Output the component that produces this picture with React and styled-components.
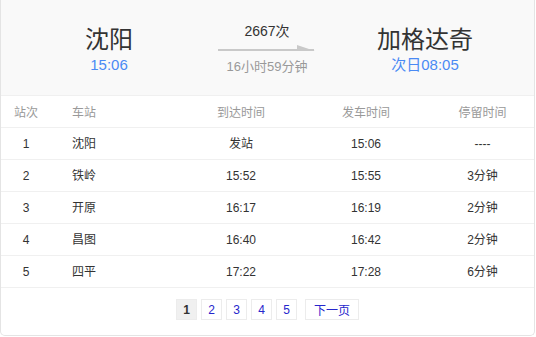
import React from 'react';
import styled, { createGlobalStyle } from 'styled-components';

const stops = [
  { no: 1, name: '沈阳', arrive: '发站', depart: '15:06', stay: '----' },
  { no: 2, name: '铁岭', arrive: '15:52', depart: '15:55', stay: '3分钟' },
  { no: 3, name: '开原', arrive: '16:17', depart: '16:19', stay: '2分钟' },
  { no: 4, name: '昌图', arrive: '16:40', depart: '16:42', stay: '2分钟' },
  { no: 5, name: '四平', arrive: '17:22', depart: '17:28', stay: '6分钟' },
];

const GlobalStyle = createGlobalStyle`
  body {
    margin: 0;
    background: #fff;
    font-family: "Liberation Sans", Arial, "Noto Sans CJK SC", sans-serif;
  }
`;

const Card = styled.div`
  width: 535px;
  height: 336px;
  box-sizing: border-box;
  border: 1px solid #e4e4e4;
  border-top: none;
  border-radius: 0 0 5px 5px;
  overflow: hidden;
  background: #fff;
`;

const Summary = styled.div`
  height: 96px;
  box-sizing: border-box;
  background: #f9f9f9;
  border-bottom: 1px solid #f0f0f0;
  display: grid;
  grid-template-columns: 216px 100px 216px;
  align-items: center;
`;

const Station = styled.div`
  display: flex;
  flex-direction: column;
  align-items: center;
  padding-top: 4px;
`;

const City = styled.div`
  font-size: 24px;
  color: #333;
  line-height: 30px;
`;

const Time = styled.div`
  font-size: 15px;
  color: #4a8af4;
  line-height: 18px;
  margin-top: 1px;
`;

const Middle = styled.div`
  display: flex;
  flex-direction: column;
  align-items: center;
  padding-top: 2px;
`;

const TrainNo = styled.div`
  font-size: 14px;
  color: #333;
  line-height: 16px;
`;

const Duration = styled.div`
  font-size: 13px;
  color: #999;
  line-height: 16px;
  margin-top: 6px;
`;

const Row = styled.div`
  display: grid;
  grid-template-columns: 50px 130px 120px 130px 103px;
  height: 32px;
  box-sizing: border-box;
  align-items: center;
  border-bottom: 1px solid #f0f0f0;
  font-size: 12px;
  color: ${(p) => (p.$head ? '#999' : '#333')};
  padding-top: ${(p) => (p.$head ? '2px' : '0')};
`;

const Cell = styled.div`
  line-height: 16px;
  height: 16px;
  text-align: ${(p) => (p.$left ? 'left' : 'center')};
  padding-left: ${(p) => (p.$left ? '21px' : '0')};
`;

const Pager = styled.div`
  display: flex;
  justify-content: center;
  gap: 4px;
  padding-top: 11px;
`;

const PageBtn = styled.span`
  min-width: 21px;
  height: 21px;
  box-sizing: border-box;
  padding: 0 ${(p) => (p.$wide ? '8px' : '0')};
  margin-left: ${(p) => (p.$wide ? '4px' : '0')};
  display: flex;
  align-items: center;
  justify-content: center;
  font-size: 12px;
  border: 1px solid #ececec;
  background: ${(p) => (p.$active ? '#f0f0f0' : '#fff')};
  color: ${(p) => (p.$active ? '#333' : '#2626cc')};
  font-weight: ${(p) => (p.$active ? 'bold' : 'normal')};
`;

const Arrow = () => (
  <svg width="98" height="10" viewBox="0 0 98 10" style={{ display: 'block', marginTop: 4 }}>
    <rect x="0" y="6" width="96" height="2" fill="#c9c9c9" />
    <polygon points="79,2 97,8 79,8" fill="#c9c9c9" />
  </svg>
);

export default function App() {
  return (
    <>
      <GlobalStyle />
      <Card>
        <Summary>
          <Station>
            <City>沈阳</City>
            <Time>15:06</Time>
          </Station>
          <Middle>
            <TrainNo>2667次</TrainNo>
            <Arrow />
            <Duration>16小时59分钟</Duration>
          </Middle>
          <Station>
            <City>加格达奇</City>
            <Time>次日08:05</Time>
          </Station>
        </Summary>
        <Row $head>
          <Cell>站次</Cell>
          <Cell $left>车站</Cell>
          <Cell>到达时间</Cell>
          <Cell>发车时间</Cell>
          <Cell>停留时间</Cell>
        </Row>
        {stops.map((s) => (
          <Row key={s.no}>
            <Cell>{s.no}</Cell>
            <Cell $left>{s.name}</Cell>
            <Cell>{s.arrive}</Cell>
            <Cell>{s.depart}</Cell>
            <Cell>{s.stay}</Cell>
          </Row>
        ))}
        <Pager>
          {[1, 2, 3, 4, 5].map((n) => (
            <PageBtn key={n} $active={n === 1}>{n}</PageBtn>
          ))}
          <PageBtn $wide>下一页</PageBtn>
        </Pager>
      </Card>
    </>
  );
}
